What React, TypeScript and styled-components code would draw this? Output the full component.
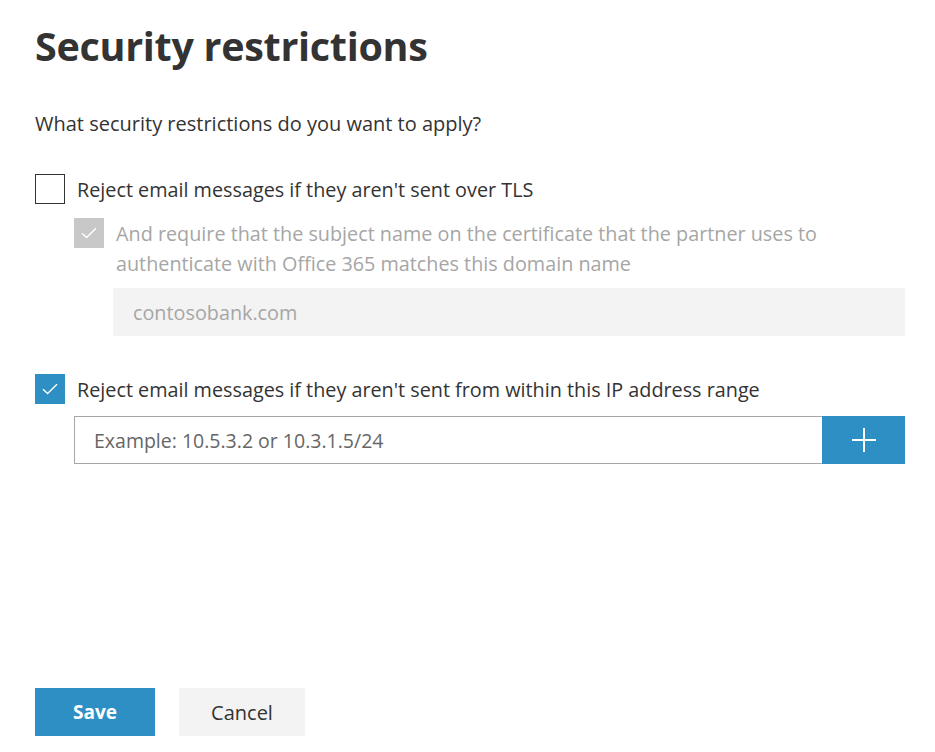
import React from 'react';
import styled, { createGlobalStyle } from 'styled-components';

const GlobalStyle = createGlobalStyle`
  html, body {
    margin: 0;
    padding: 0;
    background: #fff;
    font-family: "Open Sans", "Noto Sans", sans-serif;
    color: #333;
  }
  * { box-sizing: border-box; }
`;

const Page = styled.div`
  min-height: 100vh;
  display: flex;
  flex-direction: column;
  padding: 17px 30px 16px 35px;
`;

const Title = styled.h1`
  font-size: 39.5px;
  font-weight: 700;
  margin: 0;
  line-height: 58px;
  letter-spacing: -0.3px;
  color: #333;
`;

const Question = styled.p`
  font-size: 20px;
  margin: 37px 0 0;
  line-height: 24px;
`;

const Options = styled.div`
  display: flex;
  flex-direction: column;
  margin-top: 38px;
`;

const Row = styled.label<{ $indent?: number; $disabled?: boolean; $gapTop?: number }>`
  display: flex;
  align-items: flex-start;
  gap: 12px;
  margin-left: ${(p) => p.$indent ?? 0}px;
  margin-top: ${(p) => p.$gapTop ?? 0}px;
  color: ${(p) => (p.$disabled ? '#a6a6a6' : '#333')};
  font-size: 19.8px;
  line-height: 30px;
`;

const Label = styled.span`
  position: relative;
  top: 1px;
`;

const Box = styled.span<{ $state: 'off' | 'on' | 'disabled' }>`
  flex: none;
  width: 30px;
  height: 30px;
  display: flex;
  align-items: center;
  justify-content: center;
  border: ${(p) => (p.$state === 'off' ? '1px solid #333' : 'none')};
  background: ${(p) =>
    p.$state === 'on' ? '#2e8fc5' : p.$state === 'disabled' ? '#c8c8c8' : '#fff'};
`;

const Sub = styled.div`
  display: flex;
  flex-direction: column;
  margin-top: 14px;
`;

const DisabledInput = styled.div`
  margin: 10px 0 0 78px;
  height: 48px;
  background: #f3f3f3;
  color: #a6a6a6;
  font-size: 19.8px;
  display: flex;
  align-items: center;
  padding-left: 20px;
`;

const IpRow = styled.div`
  display: flex;
  margin: 12px 0 0 39px;
  height: 48px;
`;

const IpInput = styled.div`
  flex: 1;
  border: 1px solid #a6a6a6;
  border-right: none;
  color: #666;
  font-size: 19.5px;
  display: flex;
  align-items: center;
  padding-left: 19px;
`;

const AddButton = styled.button`
  width: 83px;
  border: none;
  background: #2e8fc5;
  display: flex;
  align-items: center;
  justify-content: center;
  cursor: pointer;
`;

const Footer = styled.div`
  margin-top: auto;
  display: flex;
  gap: 24px;
`;

const Button = styled.button<{ $primary?: boolean }>`
  height: 48px;
  border: none;
  font-family: inherit;
  font-size: ${(p) => (p.$primary ? 19 : 20)}px;
  font-weight: ${(p) => (p.$primary ? 700 : 400)};
  background: ${(p) => (p.$primary ? '#2e8fc5' : '#f3f3f3')};
  color: ${(p) => (p.$primary ? '#fff' : '#333')};
  width: ${(p) => (p.$primary ? 120 : 126)}px;
  cursor: pointer;
`;

const Check = () => (
  <svg width="16" height="12" viewBox="0 0 16 12">
    <path d="M1 6.2 L5.6 10.6 L15 1.2" fill="none" stroke="#fff" strokeWidth="1.4" />
  </svg>
);

const Plus = () => (
  <svg width="26" height="26" viewBox="0 0 26 26">
    <path d="M13 1 V25 M1 13 H25" stroke="#fff" strokeWidth="2" />
  </svg>
);

export default function App() {
  return (
    <>
      <GlobalStyle />
      <Page>
        <Title>Security restrictions</Title>
        <Question>What security restrictions do you want to apply?</Question>

        <Options>
          <Row>
            <Box $state="off" />
            <Label>Reject email messages if they aren't sent over TLS</Label>
          </Row>
          <Sub>
            <Row $indent={39} $disabled>
              <Box $state="disabled">
                <Check />
              </Box>
              <Label>
                And require that the subject name on the certificate that the partner uses to
                <br />
                authenticate with Office 365 matches this domain name
              </Label>
            </Row>
            <DisabledInput>contosobank.com</DisabledInput>
          </Sub>

          <Row $gapTop={38}>
            <Box $state="on">
              <Check />
            </Box>
            <Label>Reject email messages if they aren't sent from within this IP address range</Label>
          </Row>
          <IpRow>
            <IpInput>Example: 10.5.3.2 or 10.3.1.5/24</IpInput>
            <AddButton aria-label="Add">
              <Plus />
            </AddButton>
          </IpRow>
        </Options>

        <Footer>
          <Button $primary>Save</Button>
          <Button>Cancel</Button>
        </Footer>
      </Page>
    </>
  );
}
